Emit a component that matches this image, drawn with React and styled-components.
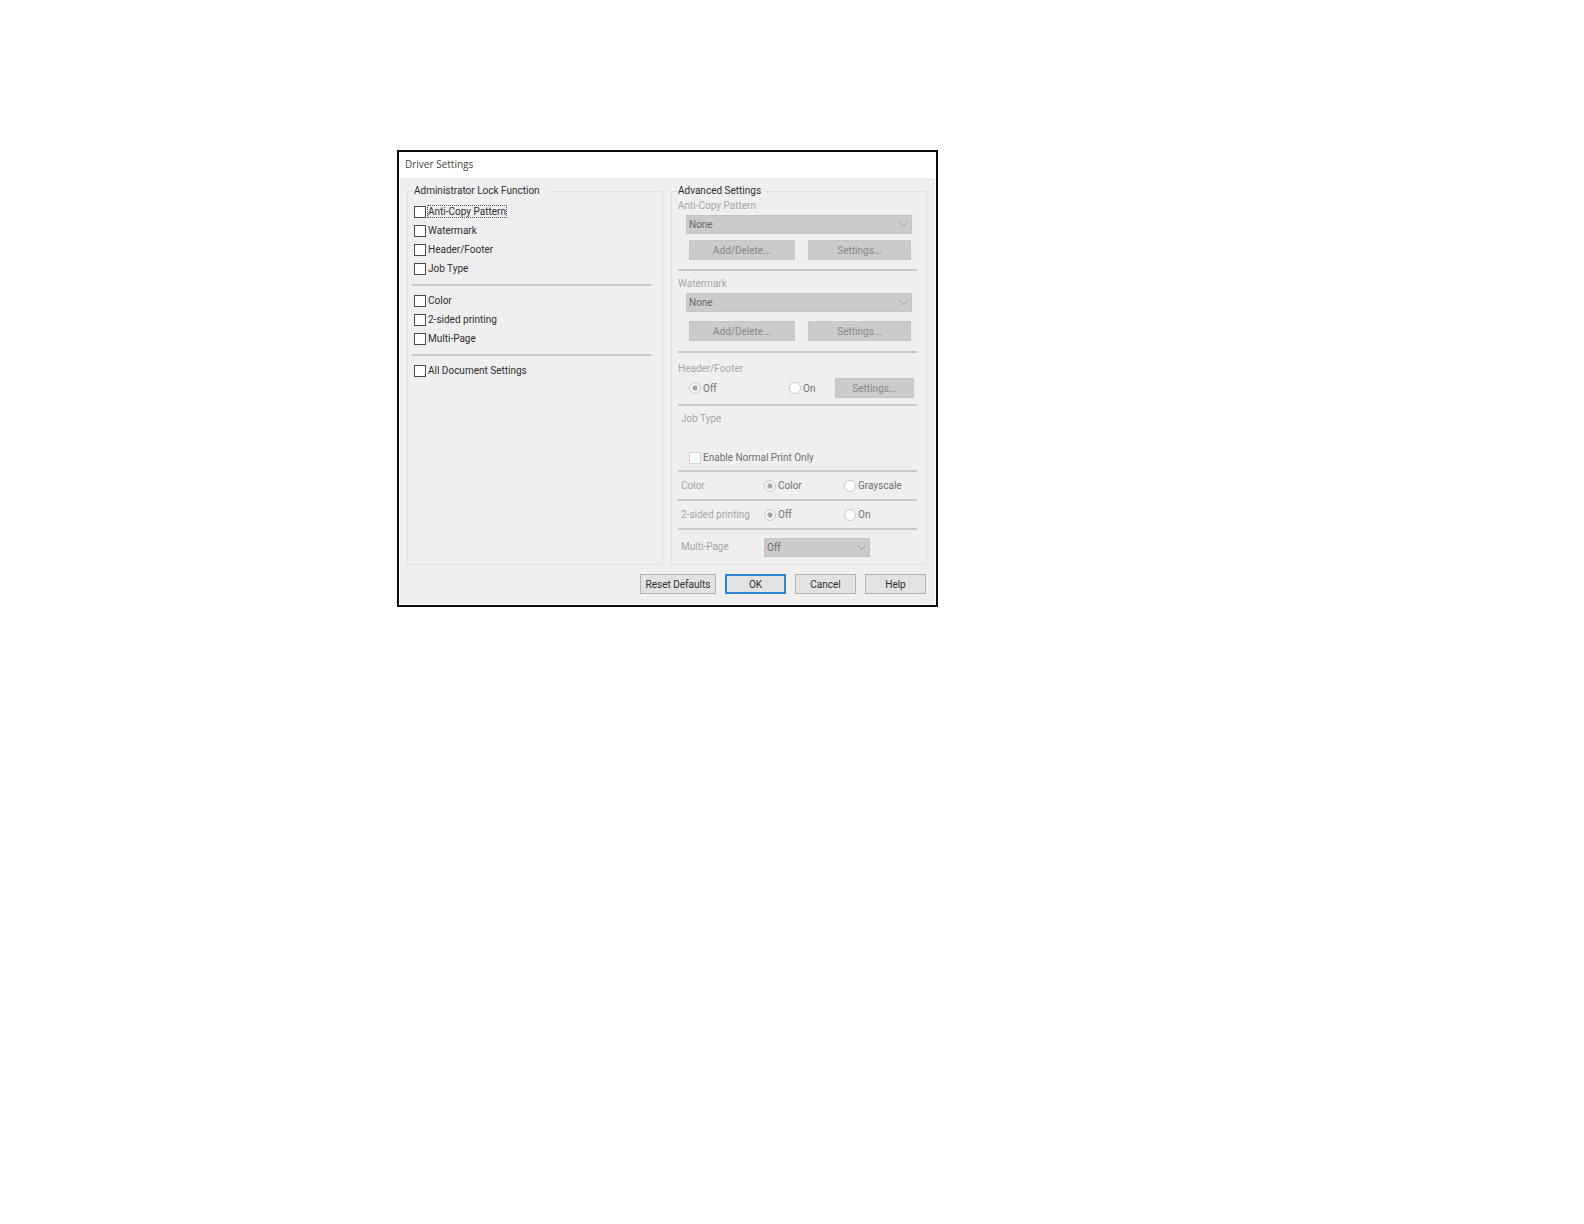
import React, { useState } from 'react'
import styled, { createGlobalStyle } from 'styled-components'

const lockGroups = [
  ['Anti-Copy Pattern', 'Watermark', 'Header/Footer', 'Job Type'],
  ['Color', '2-sided printing', 'Multi-Page'],
  ['All Document Settings'],
]

const Dropdown = ({ label, value, narrow }) => (
  <SelectWrap $narrow={narrow}>
    <select aria-label={label} defaultValue={value} disabled>
      <option>{value}</option>
    </select>
    <svg width="9" height="5" viewBox="0 0 9 5" fill="none" stroke="#a2a2a2">
      <path d="M0.5 0.5 L4.5 4.2 L8.5 0.5" />
    </svg>
  </SelectWrap>
)

const Radio = ({ name, label, checked }) => (
  <Choice>
    <RadioInput type="radio" name={name} defaultChecked={checked} disabled />
    <span>{label}</span>
  </Choice>
)

const App = () => {
  const [locked, setLocked] = useState([])

  const toggle = (item) =>
    setLocked(locked.includes(item) ? locked.filter((i) => i !== item) : [...locked, item])

  return (
    <Page>
      <GlobalStyle />
      <Dialog>
        <TitleBar>Driver Settings</TitleBar>
        <Body>
          <Groups>
            <LockGroup>
              <legend>Administrator Lock Function</legend>
              {lockGroups.map((items, index) => (
                <React.Fragment key={index}>
                  {index > 0 && <LockDivider />}
                  {items.map((item) => (
                    <LockChoice key={item} $focused={item === 'Anti-Copy Pattern'}>
                      <CheckInput
                        type="checkbox"
                        checked={locked.includes(item)}
                        onChange={() => toggle(item)}
                      />
                      <span>{item}</span>
                    </LockChoice>
                  ))}
                </React.Fragment>
              ))}
            </LockGroup>

            <AdvancedGroup>
              <legend>Advanced Settings</legend>
              <Section $bottom={9}>
                <SectionLabel>Anti-Copy Pattern</SectionLabel>
                <Dropdown label="Anti-Copy Pattern" value="None" />
                <ButtonRow $top={6}>
                  <FlatButton disabled>Add/Delete...</FlatButton>
                  <FlatButton disabled>Settings...</FlatButton>
                </ButtonRow>
              </Section>
              <Divider />
              <Section $top={5} $bottom={10}>
                <SectionLabel>Watermark</SectionLabel>
                <Dropdown label="Watermark" value="None" />
                <ButtonRow $top={9}>
                  <FlatButton disabled>Add/Delete...</FlatButton>
                  <FlatButton disabled>Settings...</FlatButton>
                </ButtonRow>
              </Section>
              <Divider />
              <Section $top={8} $bottom={6}>
                <SectionLabel>Header/Footer</SectionLabel>
                <HeaderRow>
                  <Radio name="header" label="Off" checked />
                  <Radio name="header" label="On" />
                  <FlatButton disabled>Settings...</FlatButton>
                </HeaderRow>
              </Section>
              <Divider />
              <Section $top={5} $bottom={3}>
                <SectionLabel $indent>Job Type</SectionLabel>
                <JobChoice>
                  <CheckInput type="checkbox" disabled />
                  <span>Enable Normal Print Only</span>
                </JobChoice>
              </Section>
              <Divider />
              <OptionRow>
                <SectionLabel>Color</SectionLabel>
                <Radio name="color" label="Color" checked />
                <Radio name="color" label="Grayscale" />
              </OptionRow>
              <Divider />
              <OptionRow>
                <SectionLabel>2-sided printing</SectionLabel>
                <Radio name="sided" label="Off" checked />
                <Radio name="sided" label="On" />
              </OptionRow>
              <Divider />
              <PageRow>
                <SectionLabel>Multi-Page</SectionLabel>
                <Dropdown label="Multi-Page" value="Off" narrow />
              </PageRow>
            </AdvancedGroup>
          </Groups>
          <Footer>
            <Button $wide>Reset Defaults</Button>
            <Button $primary>OK</Button>
            <Button>Cancel</Button>
            <Button>Help</Button>
          </Footer>
        </Body>
      </Dialog>
    </Page>
  )
}

export default App

const GlobalStyle = createGlobalStyle`
  * {
    box-sizing: border-box;
  }
  body {
    margin: 0;
    background: #fff;
  }
  body, button, select, input {
    font-family: Roboto, "Noto Sans", sans-serif;
    font-size: 10px;
  }
`

const Page = styled.main`
  padding: 150px 24px 24px 397px;
`

const Dialog = styled.section`
  max-width: 541px;
  border: 2px solid #0a0a0a;
  padding: 0 1px 1px;
  background: #fff;
  color: #2e2e2e;
`

const TitleBar = styled.header`
  height: 26px;
  line-height: 24px;
  padding-left: 5px;
  font-family: "Open Sans", "Noto Sans", sans-serif;
  color: #444;
`

const Body = styled.div`
  background: #efefef;
  padding: 6px 8px 10px 7px;
`

const Groups = styled.div`
  display: grid;
  grid-template-columns: 1fr 1fr;
  gap: 8px;
`

const Group = styled.fieldset`
  min-width: 0;
  margin: 0;
  border: 1px solid #e0e0e0;
  legend {
    height: 14px;
    line-height: 14px;
  }
`

const LockGroup = styled(Group)`
  padding: 4px 11px 0 4px;
  legend {
    padding: 0 10px 0 2px;
  }
`

const AdvancedGroup = styled(Group)`
  padding: 0 9px 0 6px;
  legend {
    padding: 0 4px 0 0;
  }
`

const Divider = styled.hr`
  height: 2px;
  margin: 0;
  border: 0;
  background: #c9cac8;
`

const LockDivider = styled(Divider)`
  margin: 6px 0 5px;
`

const Choice = styled.label`
  display: flex;
  align-items: center;
  gap: 2px;
  color: #707070;
  white-space: nowrap;
`

const LockChoice = styled(Choice)`
  height: 19px;
  padding-left: 2px;
  color: #2e2e2e;
  span {
    line-height: 11px;
    outline: ${(props) => (props.$focused ? '1px dotted #555' : 'none')};
  }
`

const JobChoice = styled(Choice)`
  height: 19px;
  margin-top: 21px;
  padding-left: 11px;
`

const CheckInput = styled.input`
  appearance: none;
  width: 12px;
  height: 12px;
  margin: 0;
  border: 1px solid #4a4a4a;
  background: #fff;
  &:checked {
    background: #333;
    box-shadow: inset 0 0 0 2px #fff;
  }
  &:disabled {
    border-color: #d4d4d4;
  }
`

const RadioInput = styled.input`
  appearance: none;
  width: 12px;
  height: 12px;
  margin: 0;
  border: 1px solid #cacaca;
  border-radius: 50%;
  background: #fff;
  &:checked {
    background: radial-gradient(circle, #a4a4a4 2px, #f4f4f4 3px);
  }
`

const Section = styled.div`
  padding-top: ${(props) => props.$top || 0}px;
  padding-bottom: ${(props) => props.$bottom}px;
`

const SectionLabel = styled.div`
  line-height: 16px;
  padding-left: ${(props) => (props.$indent ? '3px' : '0')};
  color: #a6a6a6;
`

const SelectWrap = styled.div`
  position: relative;
  margin: ${(props) => (props.$narrow ? '0' : '1px 5px 0 8px')};
  width: ${(props) => (props.$narrow ? '106px' : 'auto')};
  select {
    display: block;
    appearance: none;
    width: 100%;
    height: 19px;
    padding: 0 20px 0 2px;
    border: 1px solid #c4c4c4;
    border-radius: 0;
    background: #cbcbcb;
    color: #6a6a6a;
    opacity: 1;
  }
  svg {
    position: absolute;
    right: 4px;
    top: 7px;
  }
`

const ButtonRow = styled.div`
  display: grid;
  grid-template-columns: 106fr 103fr;
  gap: 13px;
  margin-top: ${(props) => props.$top}px;
  padding: 0 6px 0 11px;
`

const FlatButton = styled.button`
  height: 20px;
  padding: 0;
  border: 1px solid #c6c6c6;
  background: #cbcbcb;
  color: #888;
`

const HeaderRow = styled.div`
  display: grid;
  grid-template-columns: 100px 46px 79px;
  margin-top: 1px;
  padding-left: 11px;
`

const OptionRow = styled.div`
  display: grid;
  grid-template-columns: 83px 80px 1fr;
  align-items: center;
  height: 27px;
  padding-left: 3px;
`

const PageRow = styled(OptionRow)`
  grid-template-columns: 83px 1fr;
  height: 34px;
`

const Footer = styled.footer`
  display: flex;
  justify-content: flex-end;
  gap: 9px;
  padding: 9px 1px 0 0;
`

const Button = styled.button`
  width: ${(props) => (props.$wide ? '76px' : '61px')};
  height: 20px;
  padding: 0;
  border: ${(props) => (props.$primary ? '2px solid #2a84cf' : '1px solid #b4b4b4')};
  background: #e2e2e2;
  color: #2e2e2e;
  white-space: nowrap;
`
